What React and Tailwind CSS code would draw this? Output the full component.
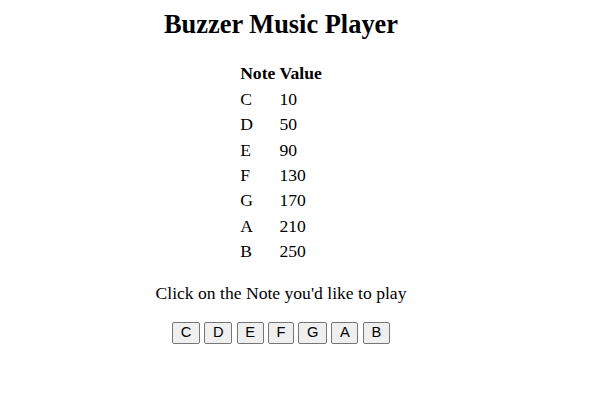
const notes = [
  ["C", 10],
  ["D", 50],
  ["E", 90],
  ["F", 130],
  ["G", 170],
  ["A", 210],
  ["B", 250],
];

export default function App() {
  return (
    <div className="w-[562px] bg-white text-black text-center font-['Liberation_Serif',serif] text-[17.6px] leading-[20.8px] pt-[9px]">
      <h2 className="text-[26.4px] leading-[30px] font-bold">Buzzer Music Player</h2>

      <table className="mx-auto mt-[21.3px] border-separate border-spacing-[2.2px] text-left leading-[21.2px]">
        <thead>
          <tr>
            <th className="p-[1.1px] font-bold text-center">Note</th>
            <th className="p-[1.1px] font-bold text-center">Value</th>
          </tr>
        </thead>
        <tbody>
          {notes.map(([note, value]) => (
            <tr key={note}>
              <td className="p-[1.1px]">{note}</td>
              <td className="p-[1.1px]">{value}</td>
            </tr>
          ))}
        </tbody>
      </table>

      <p className="mt-[17.8px]">Click on the Note you'd like to play</p>

      <div className="mt-[17.5px] flex justify-center gap-[4.4px]">
        {notes.map(([note]) => (
          <button
            key={note}
            className="h-[22px] px-[7.6px] flex items-center bg-[#efefef] border border-[#767676] rounded-[2px] font-['Liberation_Sans',Arial,sans-serif] text-[14.7px] leading-none text-black"
          >
            {note}
          </button>
        ))}
      </div>
    </div>
  );
}
